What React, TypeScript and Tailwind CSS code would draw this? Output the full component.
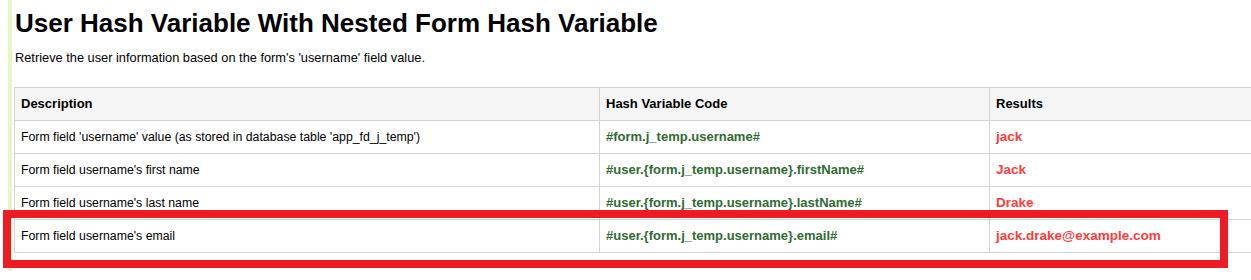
import React from "react";

const rows = [
  {
    desc: "Form field 'username' value (as stored in database table 'app_fd_j_temp')",
    code: "#form.j_temp.username#",
    result: "jack",
  },
  {
    desc: "Form field username's first name",
    code: "#user.{form.j_temp.username}.firstName#",
    result: "Jack",
  },
  {
    desc: "Form field username's last name",
    code: "#user.{form.j_temp.username}.lastName#",
    result: "Drake",
  },
  {
    desc: "Form field username's email",
    code: "#user.{form.j_temp.username}.email#",
    result: "jack.drake@example.com",
  },
];

export default function App() {
  return (
    <div
      className="relative w-[1251px] h-[280px] overflow-hidden bg-white text-black"
      style={{ fontFamily: '"Liberation Sans", Arial, sans-serif' }}
    >
      <div className="ml-[8px] border-l-4 border-[#e6f7c2] pl-[2px] pt-[8px] pb-[18px]">
        <h1 className="pl-[1px] text-[26px] leading-[30px] font-bold">
          User Hash Variable With Nested Form Hash Variable
        </h1>
        <p className="mt-[12px] pl-[1px] text-[12.8px] leading-[16px]">
          Retrieve the user information based on the form's 'username' field value.
        </p>

        <div className="mt-[21px] w-[1300px] border-l border-t border-[#d4d4d4] text-[12.3px] leading-[16px]">
          <div className="grid grid-cols-[585px_390px_1fr] bg-[#f5f5f5] font-bold text-[13px]">
            <div className="h-[33px] flex items-center px-[6px] border-r border-b border-[#d4d4d4]">Description</div>
            <div className="h-[33px] flex items-center px-[6px] border-r border-b border-[#d4d4d4]">Hash Variable Code</div>
            <div className="h-[33px] flex items-center px-[6px] border-b border-[#d4d4d4]">Results</div>
          </div>
          {rows.map((r) => (
            <div key={r.code} className="grid grid-cols-[585px_390px_1fr]">
              <div className="h-[33px] flex items-center px-[6px] border-r border-b border-[#d4d4d4]">{r.desc}</div>
              <div className="h-[33px] flex items-center px-[6px] border-r border-b border-[#d4d4d4] font-bold text-[13px] text-[#2f6b2f]">
                {r.code}
              </div>
              <div className="h-[33px] flex items-center px-[6px] border-b border-[#d4d4d4] font-bold text-[13.5px] text-[#ff3b3b]">
                {r.result}
              </div>
            </div>
          ))}
        </div>
      </div>

      {/* highlight frame around the email row */}
      <div className="absolute left-[3px] top-[210px] w-[1225px] h-[58px] border-[8px] border-[#ed1c24]" />
    </div>
  );
}
